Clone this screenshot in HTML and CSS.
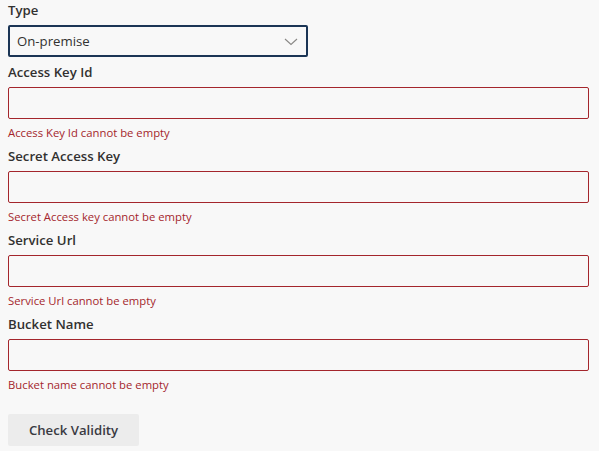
FILE: index.html
```html
<!DOCTYPE html>
<html lang="en">
<head>
  <meta charset="UTF-8" />
  <title>Storage settings</title>
  <meta name="viewport" content="width=device-width, initial-scale=1.0" />
  <link rel="stylesheet" href="styles.css">
</head>
<body>
<div class="form">
  <label class="label first" for="type">Type</label>
  <div class="dropdown" id="type" tabindex="0">
    <span class="dropdown-text">On-premise</span>
    <svg class="chevron" width="14" height="8" viewBox="0 0 14 8">
      <path d="M1 1 L7 6.5 L13 1" fill="none" stroke="#8a8886" stroke-width="1.1" />
    </svg>
  </div>

  <label class="label" for="accessKey">Access Key Id</label>
  <input class="field invalid" id="accessKey" type="text" />
  <div class="error">Access Key Id cannot be empty</div>

  <label class="label" for="secretKey">Secret Access Key</label>
  <input class="field invalid" id="secretKey" type="text" />
  <div class="error">Secret Access key cannot be empty</div>

  <label class="label" for="serviceUrl">Service Url</label>
  <input class="field invalid" id="serviceUrl" type="text" />
  <div class="error">Service Url cannot be empty</div>

  <label class="label" for="bucket">Bucket Name</label>
  <input class="field invalid" id="bucket" type="text" />
  <div class="error">Bucket name cannot be empty</div>

  <div class="actions">
    <button class="btn">Check Validity</button>
  </div>
</div>
</body>
</html>
```

FILE: styles.css
```css
body {
  margin: 0;
  background: #f8f8f8;
  font-family: "Open Sans", "Noto Sans", sans-serif;
  color: #323130;
}
.form {
  display: flex;
  flex-direction: column;
  padding: 0 10px 0 8px;
}
.label {
  display: block;
  font-size: 13.2px;
  font-weight: 550;
  line-height: 20px;
  padding: 5px 0;
  color: #323130;
}
.label.first {
  padding-top: 0;
}
.dropdown {
  box-sizing: border-box;
  width: 300px;
  height: 32px;
  border: 2px solid #1b3555;
  border-radius: 2px;
  background: #f8f8f8;
  display: flex;
  align-items: center;
  justify-content: space-between;
  padding: 0 8px 0 7px;
  font-size: 13.2px;
}
.dropdown-text {
  line-height: 20px;
}
.chevron {
  margin-top: 1px;
}
.field {
  box-sizing: border-box;
  width: 100%;
  height: 32px;
  margin: 0;
  padding: 0 8px;
  border: 1px solid #a4262c;
  border-radius: 2px;
  background: #f8f8f8;
  font-family: inherit;
  font-size: 13px;
  outline: none;
}
.error {
  font-size: 11.3px;
  line-height: 17px;
  padding-top: 5px;
  color: #a4262c;
}
.actions {
  padding-top: 21px;
}
.btn {
  box-sizing: border-box;
  width: 131px;
  height: 32px;
  padding: 0;
  border: none;
  border-radius: 2px;
  background: #ececec;
  color: #3a3a42;
  font-family: inherit;
  font-size: 13.2px;
  font-weight: 550;
  cursor: pointer;
}
```
